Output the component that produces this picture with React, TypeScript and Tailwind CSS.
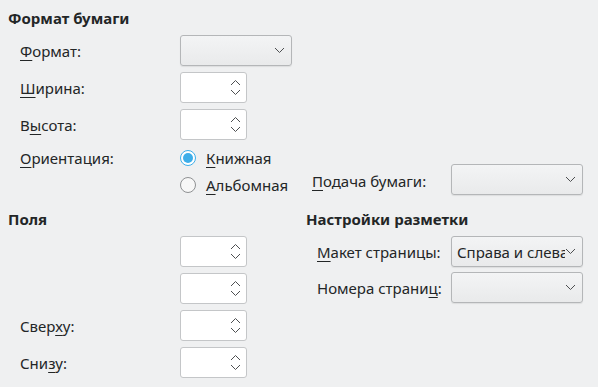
import React from "react";

const U = ({ children }: { children: React.ReactNode }) => (
  <span className="underline underline-offset-[3px] decoration-1">{children}</span>
);

function ChevronDown() {
  return (
    <svg width="11" height="7" viewBox="0 0 11 7" className="shrink-0">
      <path d="M1 1l4.5 4.5L10 1" fill="none" stroke="#4d4f51" strokeWidth="1" />
    </svg>
  );
}

function Combo({ w, value }: { w: string; value?: string }) {
  return (
    <div
      className={`${w} h-[31px] flex items-center pl-[5px] pr-[6px] rounded-[3px] border border-[#b4b6b8] bg-gradient-to-b from-[#f3f4f5] to-[#e9eaeb] shadow-[0_1px_1px_rgba(0,0,0,0.08)]`}
    >
      <span className="flex-1 min-w-0 overflow-hidden whitespace-nowrap">{value}</span>
      <ChevronDown />
    </div>
  );
}

function Spin() {
  return (
    <div className="w-[67px] h-[31px] flex items-center justify-end pr-[5px] rounded-[3px] border border-[#c4c6c8] bg-white">
      <div className="flex flex-col gap-[3px] items-center">
        <svg width="11" height="7" viewBox="0 0 11 7">
          <path d="M1 6l4.5-4.5L10 6" fill="none" stroke="#4d4f51" strokeWidth="1" />
        </svg>
        <svg width="11" height="7" viewBox="0 0 11 7">
          <path d="M1 1l4.5 4.5L10 1" fill="none" stroke="#4d4f51" strokeWidth="1" />
        </svg>
      </div>
    </div>
  );
}

function Radio({ checked, children }: { checked?: boolean; children: React.ReactNode }) {
  return (
    <div className="flex items-center h-[27px]">
      {checked ? (
        <span className="w-[16px] h-[16px] rounded-full border border-[#3daee9] bg-white flex items-center justify-center">
          <span className="w-[10px] h-[10px] rounded-full bg-[#3daee9]" />
        </span>
      ) : (
        <span className="w-[16px] h-[16px] rounded-full border border-[#8f9193] bg-[#f7f7f7]" />
      )}
      <span className="ml-[10px]">{children}</span>
    </div>
  );
}

function Row({ label, children }: { label?: React.ReactNode; children: React.ReactNode }) {
  return (
    <div className="flex items-center h-[31px]">
      <div className="w-[172px] pl-[12px]">{label}</div>
      {children}
    </div>
  );
}

export default function App() {
  return (
    <div
      className="w-[598px] h-[387px] bg-[#eff0f1] text-[#232627] text-[15px] leading-[18px] overflow-hidden pl-[8px] pt-[9px]"
      style={{ fontFamily: '"Noto Sans", sans-serif' }}
    >
      <div className="font-bold mb-[8px]">Формат бумаги</div>
      <div className="flex flex-col gap-[6px]">
        <Row label={<><U>Ф</U>ормат:</>}>
          <Combo w="w-[112px]" />
        </Row>
        <Row label={<><U>Ш</U>ирина:</>}>
          <Spin />
        </Row>
        <Row label={<>В<U>ы</U>сота:</>}>
          <Spin />
        </Row>
      </div>
      <div className="flex items-end mt-[4px]">
        <div className="flex w-[296px]">
          <div className="w-[172px] pl-[12px] h-[27px] flex items-center">
            <span><U>О</U>риентация:</span>
          </div>
          <div className="flex flex-col">
            <Radio checked>
              <U>К</U>нижная
            </Radio>
            <Radio>
              <U>А</U>льбомная
            </Radio>
          </div>
        </div>
        <div className="flex items-center h-[31px] mb-[3px]">
          <div className="w-[147px] pl-[8px] pt-[3px]">
            <U>П</U>одача бумаги:
          </div>
          <Combo w="w-[132px]" />
        </div>
      </div>
      <div className="flex mt-[12px]">
        <div className="w-[298px]">
          <div className="font-bold mb-[8px]">Поля</div>
          <div className="flex flex-col gap-[6px]">
            <Row>
              <Spin />
            </Row>
            <Row>
              <Spin />
            </Row>
            <Row label={<>Свер<U>х</U>у:</>}>
              <Spin />
            </Row>
            <Row label={<>Сни<U>з</U>у:</>}>
              <Spin />
            </Row>
          </div>
        </div>
        <div>
          <div className="font-bold mb-[8px]">Настройки разметки</div>
          <div className="flex flex-col gap-[5px]">
            <div className="flex items-center h-[31px]">
              <div className="w-[145px] pl-[11px]">
                <U>М</U>акет страницы:
              </div>
              <Combo w="w-[132px]" value="Справа и слева" />
            </div>
            <div className="flex items-center h-[31px]">
              <div className="w-[145px] pl-[11px]">
                Номера страни<U>ц</U>:
              </div>
              <Combo w="w-[132px]" />
            </div>
          </div>
        </div>
      </div>
    </div>
  );
}
